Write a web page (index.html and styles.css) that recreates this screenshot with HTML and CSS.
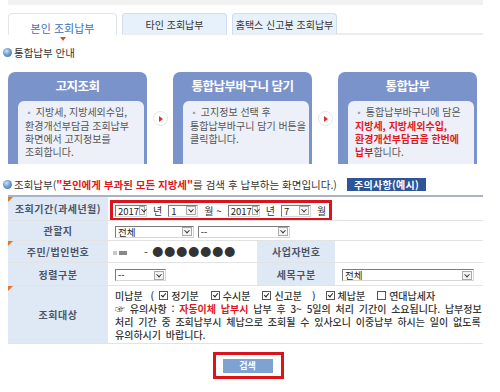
FILE: index.html
```html
<!DOCTYPE html>
<html lang="ko">
<head>
    <meta charset="UTF-8">
    <title>조회납부</title>
    <link rel="stylesheet" href="styles.css">
</head>
<body>
    <div class="top-strip"></div>

    <div class="tabs">
        <div class="tab active">본인 조회납부</div>
        <div class="tab">타인 조회납부</div>
        <div class="tab">홈택스 신고분 조회납부</div>
        <div class="tab-rest"></div>
    </div>
    <div class="tab-pointer"></div>

    <h2 class="sec-title"><span class="dot"></span>통합납부 안내</h2>

    <div class="steps">
        <div class="step">
            <div class="step-head">고지조회</div>
            <div class="step-body">
                <p><span class="bul">▪</span> 지방세, 지방세외수입,<br>환경개선부담금 조회납부<br>화면에서 고지정보를<br>조회합니다.</p>
            </div>
        </div>
        <div class="arrow"><span></span></div>
        <div class="step">
            <div class="step-head">통합납부바구니 담기</div>
            <div class="step-body">
                <p><span class="bul">▪</span> 고지정보 선택 후<br>통합납부바구니 담기 버튼을<br>클릭합니다.</p>
            </div>
        </div>
        <div class="arrow"><span></span></div>
        <div class="step">
            <div class="step-head">통합납부</div>
            <div class="step-body">
                <p><span class="bul">▪</span> 통합납부바구니에 담은<br><b class="red">지방세, 지방세외수입,</b><br><b class="red">환경개선부담금을 한번에</b><br><b class="red">납부</b>합니다.</p>
            </div>
        </div>
    </div>

    <div class="sec-row">
        <h2 class="sec-title"><span class="dot"></span>조회납부(<b class="red">"본인에게 부과된 모든 지방세"</b>를 검색 후 납부하는 화면입니다.)</h2>
        <a class="notice-btn" href="#">주의사항(예시)</a>
    </div>

    <table class="form">
        <colgroup>
            <col class="c-th">
            <col class="c-td">
            <col class="c-th2">
            <col>
        </colgroup>
        <tr class="r1">
            <th class="req">조회기간(과세년월)</th>
            <td colspan="3">
                <div class="period">
                    <span class="sel w-year">2017<i></i></span><span>년</span>
                    <span class="sel w-month">1<i></i></span><span>월 ~</span>
                    <span class="sel w-year">2017<i></i></span><span>년</span>
                    <span class="sel w-month">7<i></i></span><span>월</span>
                </div>
            </td>
        </tr>
        <tr class="r2">
            <th>관할지</th>
            <td colspan="3">
                <span class="sel w-area">전체<i></i></span>
                <span class="sel w-area2">--<i></i></span>
            </td>
        </tr>
        <tr class="r3">
            <th class="req">주민/법인번호</th>
            <td class="idno"><span class="blur"></span>- ●●●●●●●</td>
            <th class="th2">사업자번호</th>
            <td></td>
        </tr>
        <tr class="r4">
            <th>정렬구분</th>
            <td><span class="sel w-sort">--<i></i></span></td>
            <th class="th2">세목구분</th>
            <td><span class="sel w-tax">전체<i></i></span></td>
        </tr>
        <tr class="r5">
            <th class="req">조회대상</th>
            <td colspan="3" class="target">
                <div class="checks">
                    <span>미납분</span>
                    <span class="paren">(</span>
                    <span class="cb on first"></span><span class="lbl">정기분</span>
                    <span class="cb on"></span><span class="lbl">수시분</span>
                    <span class="cb on"></span><span class="lbl">신고분</span>
                    <span class="paren wide">)</span>
                    <span class="cb on after-paren"></span><span class="lbl">체납분</span>
                    <span class="cb"></span><span class="lbl">연대납세자</span>
                </div>
                <p class="note">☞ 유의사항 : <b class="red">자동이체 납부시</b> 납부 후 3~ 5일의 처리 기간이 소요됩니다. 납부정보<br>처리 기간 중 조회납부시 체납으로 조회될 수 있사오니 이중납부 하시는 일이 없도록<br>유의하시기 바랍니다.</p>
            </td>
        </tr>
    </table>

    <div class="actions">
        <div class="search-wrap"><button type="button">검색</button></div>
    </div>
</body>
</html>
```

FILE: styles.css
```css
body {
    margin: 0;
    width: 500px;
    font-family: "Noto Sans CJK KR", "Noto Sans", sans-serif;
    font-size: 10px;
    color: #444;
    background: #fff;
}
.top-strip {
    height: 5px;
    margin: 0 17px 0 8px;
    background: #f1f1f1;
}
.tabs {
    display: flex;
    align-items: flex-end;
    margin: 8px 17px 0 8px;
    height: 22px;
}
.tab {
    width: 103px;
    height: 19px;
    margin-right: 5px;
    border: 1px solid #cfdceb;
    border-bottom: 2px solid #ededed;
    border-radius: 4px 4px 0 0;
    background: #e7f1fb;
    font-size: 10px;
    line-height: 22px;
    text-align: center;
    color: #333;
}
.tab.active {
    width: 107px;
    height: 21px;
    line-height: 28px;
    background: #fff;
    border-color: #e2e6ea;
    border-bottom: none;
    color: #3c6fbf;
    font-size: 11px;
}
.tab-rest {
    flex: 1;
    height: 0;
    border-bottom: 2px solid #ededed;
    margin-left: -5px;
}
.tab-pointer {
    width: 0;
    height: 0;
    margin: 2px 0 0 60px;
    border-left: 3px solid transparent;
    border-right: 3px solid transparent;
    border-top: 4px solid #e04a3a;
}
.sec-title {
    display: flex;
    align-items: center;
    margin: 0;
    font-size: 10.5px;
    font-weight: normal;
    color: #333;
    white-space: nowrap;
}
.dot {
    display: inline-block;
    width: 9px;
    height: 9px;
    margin: 0 2px 0 3px;
    border-radius: 50%;
    background: radial-gradient(circle at 40% 35%, #cfe3f5 0, #6d9fd2 45%, #2f6aa8 100%);
}
.tab-pointer + .sec-title {
    margin-top: 4px;
}
.red {
    color: #e0171c;
}
.steps {
    display: flex;
    align-items: flex-start;
    margin: 12px 0 0 8px;
}
.step {
    width: 139px;
    height: 92px;
    background: #7b93cb;
    border-radius: 7px 7px 0 0;
}
.step-head {
    height: 29px;
    line-height: 27px;
    text-align: center;
    color: #fff;
    font-size: 12.5px;
    font-weight: bold;
    letter-spacing: -0.5px;
}
.step-body {
    height: 63px;
    margin: 0 3px 0 10px;
    background: #edf0f8;
    border-radius: 6px 6px 0 0;
}
.step-body p {
    margin: 0;
    padding: 4px 0 0 7px;
    font-size: 10px;
    line-height: 13px;
    color: #555;
    white-space: nowrap;
}
.step-body .bul {
    color: #9aa0b0;
    font-size: 8px;
}
.arrow {
    width: 26px;
    display: flex;
    justify-content: center;
    padding-top: 39px;
}
.arrow span {
    display: flex;
    align-items: center;
    justify-content: center;
    width: 13px;
    height: 13px;
    border-radius: 50%;
    background: #fff;
    border: 1px solid #e5e5e5;
}
.arrow span::before {
    content: "";
    border-top: 3px solid transparent;
    border-bottom: 3px solid transparent;
    border-left: 4px solid #e03030;
    margin-left: 1px;
}
.sec-row {
    display: flex;
    align-items: center;
    margin-top: 14px;
    height: 13px;
}
.notice-btn {
    margin-left: 10px;
    padding: 0 7px;
    height: 13px;
    line-height: 13px;
    background: #2d5597;
    color: #fff;
    font-size: 10px;
    font-weight: bold;
    letter-spacing: 0.3px;
    text-decoration: none;
}
.form {
    width: 475px;
    margin: 4px 0 0 8px;
    table-layout: fixed;
    border-collapse: collapse;
    border-top: 2px solid #a7b4c6;
    border-bottom: 1px solid #dcdcdc;
    font-size: 10px;
    line-height: 13px;
}
.c-th { width: 100px; }
.c-td { width: 149px; }
.c-th2 { width: 78px; }
.form th,
.form td {
    padding: 0 0 0 7px;
    border-bottom: 1px solid #e3e3e3;
    white-space: nowrap;
}
.form th {
    position: relative;
    padding: 0;
    background: #dfe8f5;
    font-weight: bold;
    color: #4b5566;
    text-align: center;
    letter-spacing: 0.5px;
}
.form th.th2 {
    border-left: 1px solid #e8e8e8;
}
.form th.req::before {
    content: "";
    position: absolute;
    left: 0;
    top: 0;
    border-top: 5px solid #e8742c;
    border-right: 5px solid transparent;
}
.r1 { height: 23px; }
.r2 { height: 20px; }
.r3 { height: 22px; }
.r4 { height: 23px; }
.r5 { height: 58px; }
.r1 td {
    padding: 0 0 0 2px;
    vertical-align: top;
}
.period {
    display: flex;
    align-items: center;
    gap: 6px;
    box-sizing: border-box;
    height: 21px;
    width: 222px;
    margin: 3px 0 -1px;
    padding: 0 0 0 2px;
    border: 3px solid #d9141d;
    color: #333;
}
.sel {
    display: inline-flex;
    justify-content: space-between;
    align-items: center;
    height: 12px;
    box-sizing: border-box;
    padding-left: 2px;
    border: 1px solid #7b7b7b;
    border-right-color: #d6d6d6;
    border-bottom-color: #d6d6d6;
    background: #fff;
    font-size: 9.5px;
    line-height: 10px;
    color: #222;
    vertical-align: middle;
}
.sel i {
    width: 10px;
    height: 9px;
    margin-right: 1px;
    border: 1px solid #a9a9a9;
    box-sizing: border-box;
    background: #f4f4f4;
    position: relative;
}
.sel i::after {
    content: "";
    position: absolute;
    left: 2px;
    top: 2px;
    width: 3px;
    height: 3px;
    border-right: 1px solid #333;
    border-bottom: 1px solid #333;
    transform: rotate(45deg) translate(-1px, -1px);
}
.w-year { width: 32px; }
.w-month { width: 30px; }
.w-area { width: 79px; }
.w-area2 { width: 92px; margin-left: 1px; }
.w-sort { width: 51px; }
.w-tax { width: 132px; }
.form td.idno {
    padding-left: 5px;
    font-size: 11px;
    letter-spacing: 1px;
    color: #333;
}
.blur {
    display: inline-block;
    width: 14px;
    height: 4px;
    margin-right: 17px;
    background: linear-gradient(90deg, #c8c8c8 0 30%, #fff 30% 42%, #888 42% 100%);
    vertical-align: middle;
}
.form td.target {
    vertical-align: top;
    color: #333;
    font-weight: 500;
}
.checks {
    display: flex;
    align-items: center;
    height: 13px;
    margin-top: 3px;
}
.paren {
    margin-left: 8px;
}
.paren.wide {
    margin-left: 10px;
}
.cb {
    display: inline-block;
    position: relative;
    width: 9px;
    height: 9px;
    margin: 0 3px 0 12px;
    box-sizing: border-box;
    border: 1px solid #555;
    background: #fff;
}
.cb.first {
    margin-left: 5px;
}
.cb.after-paren {
    margin-left: 10px;
}
.cb.on::after {
    content: "";
    position: absolute;
    left: 2px;
    top: 0;
    width: 2px;
    height: 4px;
    border-right: 1.5px solid #222;
    border-bottom: 1.5px solid #222;
    transform: rotate(40deg);
}
.note {
    margin: 0;
    line-height: 13px;
    word-spacing: 2px;
}
.actions {
    display: flex;
    justify-content: center;
    margin: 8px 0 0 -4px;
}
.search-wrap {
    padding: 4px 8px 3px 7px;
    border: 3px solid #d9141d;
}
button {
    display: block;
    width: 50px;
    height: 14px;
    padding: 0;
    border: none;
    background: #7ea2d1;
    color: #fff;
    font-family: "Noto Sans CJK KR", sans-serif;
    font-size: 9px;
    font-weight: bold;
    line-height: 14px;
}
```
